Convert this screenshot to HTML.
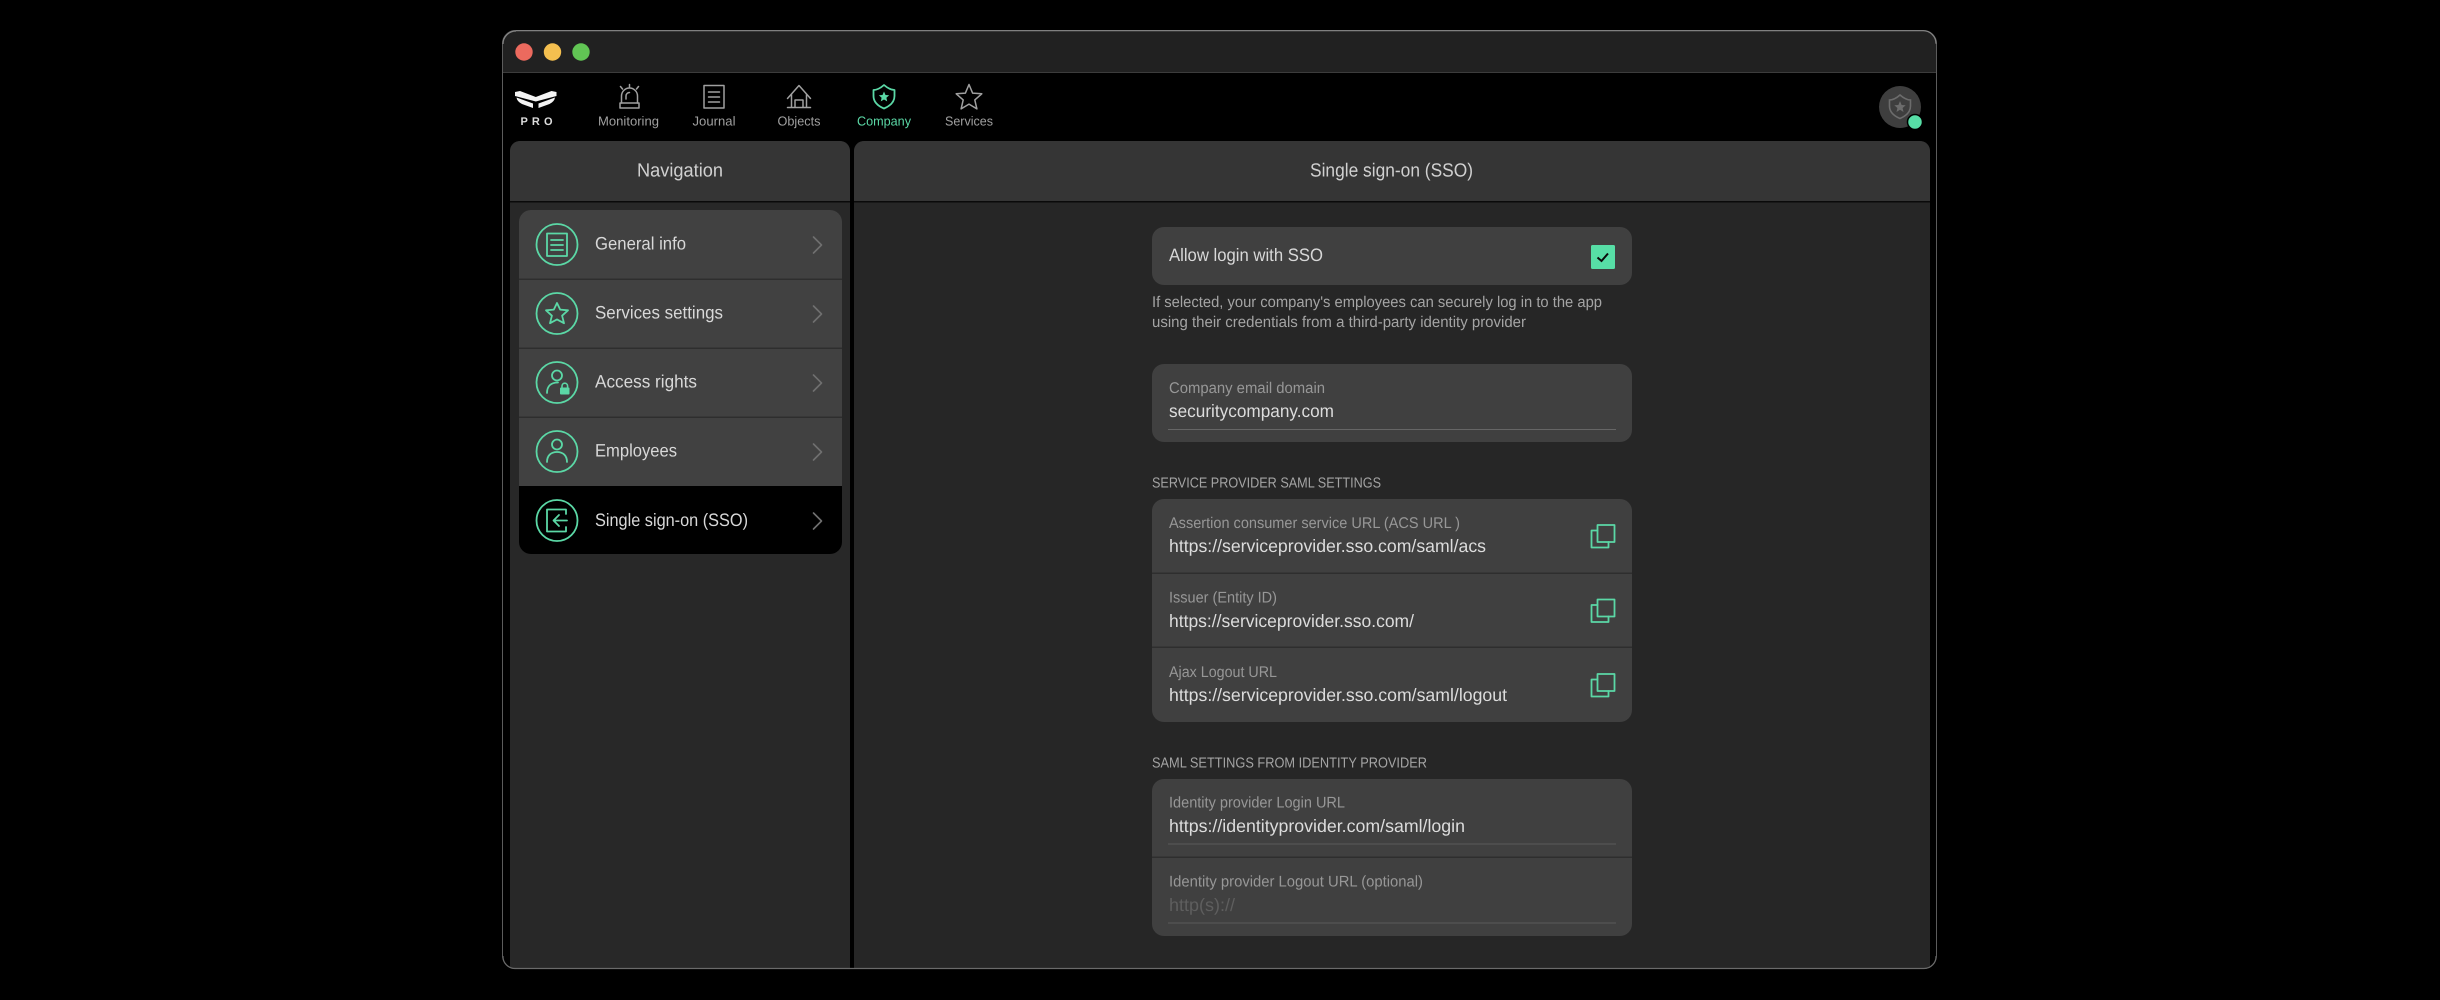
<!DOCTYPE html>
<html><head><meta charset="utf-8"><title>Single sign-on (SSO)</title>
<style>
html,body{margin:0;padding:0;background:#000;width:2440px;height:1000px;overflow:hidden}
svg{display:block}
text{font-family:"Liberation Sans",sans-serif;text-rendering:geometricPrecision}
.nav{font-size:13px;fill:#a0a0a0}
.t{font-size:19px;fill:#d0d0d0}
.m{font-size:18px;fill:#d8d8d8}
.v{font-size:18px;fill:#dcdcdc}
.l{font-size:15.5px;fill:#979797}
.h{font-size:15.5px;fill:#a4a4a4}
.s{font-size:14.5px;fill:#a4a4a4}
.g{fill:none;stroke:#5bd8a6;stroke-width:1.8;stroke-linejoin:round;stroke-linecap:round}
.i{fill:none;stroke:#a0a0a0;stroke-width:1.5;stroke-linejoin:round;stroke-linecap:round}
.c{fill:none;stroke:#6f6f6f;stroke-width:1.6;stroke-linecap:round;stroke-linejoin:round}
</style></head>
<body>
<svg width="2440" height="1000" viewBox="0 0 2440 1000" xmlns="http://www.w3.org/2000/svg">
<rect width="2440" height="1000" fill="#000"/>
<!-- window -->
<rect x="502.5" y="30.5" width="1434" height="938" rx="13" fill="#000" stroke="#5c5c5c" stroke-width="1"/>
<path d="M503 72V44a13 13 0 0 1 13-13H1923a13 13 0 0 1 13 13V72Z" fill="#212121"/>
<path d="M516 30.7H1923a13 13 0 0 1 13 13" fill="none" stroke="#858585" stroke-width="1.2"/>
<path d="M503 44a13 13 0 0 1 13-13" fill="none" stroke="#858585" stroke-width="1.2"/>
<rect x="503" y="72" width="1433" height="1" fill="#3c3c3c"/>
<circle cx="524" cy="52" r="8.7" fill="#ec6a5e"/>
<circle cx="552.5" cy="52" r="8.7" fill="#f4bf4f"/>
<circle cx="581" cy="52" r="8.7" fill="#61c554"/>

<!-- logo -->
<path d="M515 92L520 91L535.8 97L551.5 91L556.5 92V96L535.8 101.5L515 96Z" fill="#f4f4f4"/>
<path d="M516.5 97.5L533 103.500V108L522 104Q517 101.500 516.500 97.500Z" fill="#f4f4f4"/>
<path d="M555 97.500L538.500 103.500V108L549.500 104Q554.500 101.500 555 97.500Z" fill="#f4f4f4"/>
<text x="520.500" y="125" font-size="11" font-weight="700" fill="#dcdcdc" textLength="32" lengthAdjust="spacing">PRO</text>

<!-- top nav icons -->
<g class="i">
<path d="M621.500 103V96a8 8 0 0 1 16 0V103"/><rect x="620" y="103" width="19" height="5"/>
<path d="M629.500 84.500V87M620.500 86.500L622.500 89M638.500 86.500L636.500 89M626 99V96a3.500 3.500 0 0 1 3.500-3.500"/>
<rect x="704" y="85.500" width="20" height="22.500"/><path d="M708.500 92H719.500M708.500 97H719.500M708.500 102H719.500"/>
<path d="M787.500 98.500L799 85.500L810.500 98.500M791.500 94.500V107.500M806.500 94.500V107.500M787.500 107.500H810.500M795 107.500V100H803V107.500"/>
<path d="M969 84.500L972.600 93.100L981.800 93.800L974.800 99.900L976.900 108.900L969 104.100L961.100 108.900L963.200 99.900L956.200 93.800L965.400 93.100Z"/>
</g>
<path d="M884 85C880 88.500 877 90 873.500 90V96C873.500 102 878 106 884 108.500C890 106 894.500 102 894.500 96V90C891 90 888 88.500 884 85Z" class="g"/>
<path d="M884 91.500L885.500 95L889.200 95.300L886.400 97.800L887.200 101.400L884 99.500L880.800 101.400L881.600 97.800L878.800 95.300L882.500 95Z" fill="#5bd8a6"/>
<text class="nav" x="598" y="125.500" textLength="61" lengthAdjust="spacingAndGlyphs">Monitoring</text>
<text class="nav" x="692.500" y="125.500" textLength="43" lengthAdjust="spacingAndGlyphs">Journal</text>
<text class="nav" x="777.500" y="125.500" textLength="43" lengthAdjust="spacingAndGlyphs">Objects</text>
<text class="nav" x="857" y="125.500" textLength="54" lengthAdjust="spacingAndGlyphs" style="fill:#5bd8a6">Company</text>
<text class="nav" x="945" y="125.500" textLength="48" lengthAdjust="spacingAndGlyphs">Services</text>

<!-- avatar -->
<circle cx="1900" cy="107" r="21" fill="#3e3e3e"/>
<g transform="translate(1016,10)">
<path d="M884 85C880 88.500 877 90 873.500 90V96C873.500 102 878 106 884 108.500C890 106 894.500 102 894.500 96V90C891 90 888 88.500 884 85Z" fill="none" stroke="#6c6c6c" stroke-width="1.600"/>
<path d="M884 91L885.600 95L889.700 95.300L886.600 98L887.500 102L884 99.800L880.500 102L881.400 98L878.300 95.300L882.400 95Z" fill="#6c6c6c"/>
</g>
<circle cx="1915" cy="122" r="7.500" fill="#57dea6" stroke="#000" stroke-width="1.500"/>

<!-- left panel -->
<path d="M510 968V151a10 10 0 0 1 10-10H840a10 10 0 0 1 10 10V968Z" fill="#282828"/>
<path d="M510 201V151a10 10 0 0 1 10-10H840a10 10 0 0 1 10 10V201Z" fill="#353535"/>
<rect x="510" y="201" width="340" height="1.500" fill="#0a0a0a"/>
<text class="t" x="637" y="176.500" textLength="86" lengthAdjust="spacingAndGlyphs">Navigation</text>

<!-- right panel -->
<path d="M854 968V151a10 10 0 0 1 10-10H1920a10 10 0 0 1 10 10V968Z" fill="#262626"/>
<path d="M854 201V151a10 10 0 0 1 10-10H1920a10 10 0 0 1 10 10V201Z" fill="#353535"/>
<rect x="854" y="201" width="1076" height="1.500" fill="#0a0a0a"/>
<text class="t" x="1310" y="176.500" textLength="163" lengthAdjust="spacingAndGlyphs">Single sign-on (SSO)</text>

<!-- nav list -->
<path d="M519 486V222a12 12 0 0 1 12-12H830a12 12 0 0 1 12 12V486Z" fill="#414141"/>
<path d="M519 486H842V542a12 12 0 0 1-12 12H531a12 12 0 0 1-12-12Z" fill="#000"/>
<rect x="519" y="278.500" width="323" height="1.500" fill="#2e2e2e"/>
<rect x="519" y="347.500" width="323" height="1.500" fill="#2e2e2e"/>
<rect x="519" y="416.500" width="323" height="1.500" fill="#2e2e2e"/>

<g class="g">
<circle cx="557" cy="244.500" r="20.500"/><circle cx="557" cy="313.500" r="20.500"/><circle cx="557" cy="382.500" r="20.500"/><circle cx="557" cy="451.500" r="20.500"/><circle cx="557" cy="520.500" r="20.500"/>
<rect x="547" y="233.500" width="20" height="22.500"/><path d="M551 240H563M551 245H563M551 250H563"/>
<path d="M557 303L560.200 309.600L568 310.300L562.100 315.700L564 323.200L557 319.400L550 323.200L551.900 315.700L546 310.300L553.800 309.600Z"/>
<circle cx="557" cy="375.500" r="5"/><path d="M547 393C547 386 551 382.500 558 382.500"/>
<circle cx="557" cy="444.500" r="5"/><path d="M547 462C547 455.500 551 452 557 452S567 455.500 567 462"/>
<path d="M566 514V509.500H547V531.500H566V527M567 520.500H554M559 515L553.500 520.500L559 526"/>
</g>
<rect x="560" y="387.500" width="9.500" height="7" rx="1" fill="#5bd8a6"/>
<path d="M562 388V386a2.800 2.800 0 0 1 5.600 0V388" fill="none" stroke="#5bd8a6" stroke-width="1.600"/>

<text class="m" x="595" y="249.500" textLength="91" lengthAdjust="spacingAndGlyphs">General info</text>
<text class="m" x="595" y="318.500" textLength="128" lengthAdjust="spacingAndGlyphs">Services settings</text>
<text class="m" x="595" y="387.500" textLength="102" lengthAdjust="spacingAndGlyphs">Access rights</text>
<text class="m" x="595" y="456.500" textLength="82" lengthAdjust="spacingAndGlyphs">Employees</text>
<text class="m" x="595" y="526" textLength="153" lengthAdjust="spacingAndGlyphs">Single sign-on (SSO)</text>
<g class="c">
<path d="M813.500 237L821.500 245L813.500 253"/><path d="M813.500 306L821.500 314L813.500 322"/><path d="M813.500 375L821.500 383L813.500 391"/><path d="M813.500 444L821.500 452L813.500 460"/><path d="M813.500 513L821.500 521L813.500 529"/>
</g>

<!-- SSO toggle card -->
<rect x="1152" y="227" width="480" height="58" rx="12" fill="#404040"/>
<text class="m" x="1169" y="261" textLength="154" lengthAdjust="spacingAndGlyphs">Allow login with SSO</text>
<rect x="1591" y="245" width="24" height="24" rx="1.500" fill="#57dea6"/>
<path d="M1597.500 257.500L1601.500 261L1608 253.500" fill="none" stroke="#0a0a0a" stroke-width="2"/>
<text class="h" x="1152" y="307" textLength="450" lengthAdjust="spacingAndGlyphs">If selected, your company's employees can securely log in to the app</text>
<text class="h" x="1152" y="327" textLength="374" lengthAdjust="spacingAndGlyphs">using their credentials from a third-party identity provider</text>

<!-- domain -->
<rect x="1152" y="364" width="480" height="78" rx="12" fill="#404040"/>
<text class="l" x="1169" y="393" textLength="156" lengthAdjust="spacingAndGlyphs">Company email domain</text>
<text class="v" x="1169" y="417" textLength="165" lengthAdjust="spacingAndGlyphs">securitycompany.com</text>
<rect x="1168" y="429" width="448" height="1" fill="#666"/>

<!-- SP settings -->
<text class="s" x="1152" y="487.500" textLength="229" lengthAdjust="spacingAndGlyphs">SERVICE PROVIDER SAML SETTINGS</text>
<rect x="1152" y="499" width="480" height="223" rx="12" fill="#404040"/>
<rect x="1152" y="572.500" width="480" height="1.500" fill="#2e2e2e"/>
<rect x="1152" y="646.500" width="480" height="1.500" fill="#2e2e2e"/>
<text class="l" x="1169" y="528" textLength="291" lengthAdjust="spacingAndGlyphs">Assertion consumer service URL (ACS URL )</text>
<text class="v" x="1169" y="552" textLength="317" lengthAdjust="spacingAndGlyphs">https://serviceprovider.sso.com/saml/acs</text>
<text class="l" x="1169" y="602.500" textLength="108" lengthAdjust="spacingAndGlyphs">Issuer (Entity ID)</text>
<text class="v" x="1169" y="627" textLength="245" lengthAdjust="spacingAndGlyphs">https://serviceprovider.sso.com/</text>
<text class="l" x="1169" y="677" textLength="108" lengthAdjust="spacingAndGlyphs">Ajax Logout URL</text>
<text class="v" x="1169" y="701" textLength="338" lengthAdjust="spacingAndGlyphs">https://serviceprovider.sso.com/saml/logout</text>
<g class="g">
<path d="M1597.500 525H1614.500V542H1597.500Z"/><path d="M1597.500 530.500H1591.500V547.500H1608.500V542"/>
<path d="M1597.500 599.500H1614.500V616.500H1597.500Z"/><path d="M1597.500 605H1591.500V622H1608.500V616.500"/>
<path d="M1597.500 674H1614.500V691H1597.500Z"/><path d="M1597.500 679.500H1591.500V696.500H1608.500V691"/>
</g>

<!-- IdP settings -->
<text class="s" x="1152" y="767.500" textLength="275" lengthAdjust="spacingAndGlyphs">SAML SETTINGS FROM IDENTITY PROVIDER</text>
<rect x="1152" y="779" width="480" height="157" rx="12" fill="#404040"/>
<rect x="1152" y="856.500" width="480" height="1.500" fill="#2e2e2e"/>
<text class="l" x="1169" y="807.500" textLength="176" lengthAdjust="spacingAndGlyphs">Identity provider Login URL</text>
<text class="v" x="1169" y="832" textLength="296" lengthAdjust="spacingAndGlyphs">https://identityprovider.com/saml/login</text>
<rect x="1168" y="843.500" width="448" height="1" fill="#5a5a5a"/>
<text class="l" x="1169" y="886.500" textLength="254" lengthAdjust="spacingAndGlyphs">Identity provider Logout URL (optional)</text>
<text class="v" x="1169" y="911" textLength="66" lengthAdjust="spacingAndGlyphs" style="fill:#5e5e5e">http(s)://</text>
<rect x="1168" y="922.500" width="448" height="1" fill="#5a5a5a"/>

<!-- window bottom border on top -->
<path d="M503 956a12 12 0 0 0 12 12.500H1924a12 12 0 0 0 12-12.500" fill="none" stroke="#6a6a6a" stroke-width="1.200"/>
</svg>
</body></html>
